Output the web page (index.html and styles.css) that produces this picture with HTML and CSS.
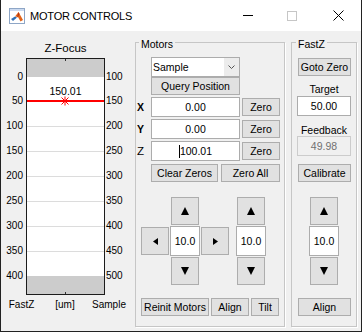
FILE: index.html
```html
<!DOCTYPE html>
<html>
<head>
<meta charset="utf-8">
<title>MOTOR CONTROLS</title>
<link rel="stylesheet" href="styles.css">
</head>
<body>
<div class="window">
  <div class="titlebar">
    <svg class="appicon" width="16" height="16" viewBox="0 0 16 16">
      <rect x="0.5" y="0.5" width="15" height="15" fill="#ffffff" stroke="#8ea6c6"/>
      <rect x="1" y="1" width="14" height="2" fill="#cbdaf0"/>
      <path d="M2 11 L6 8.5 L8 9.5 L4 13 Z" fill="#2d6fb8"/>
      <path d="M6 8.5 L9.5 4 L14 12 L11.5 13.5 L9 9 Z" fill="#e2641a"/>
      <path d="M9.5 4 L10.5 6 L9 9 L8 9.5 Z" fill="#b8360f"/>
    </svg>
    <span class="title">MOTOR CONTROLS</span>
    <div class="winbtns">
      <div class="wb"><svg class="minglyph" width="10" height="1" viewBox="0 0 10 1"><rect width="10" height="1" fill="#000"/></svg></div>
      <div class="wb"><svg width="10" height="10" viewBox="0 0 10 10"><rect x="0.5" y="0.5" width="9" height="9" fill="none" stroke="#c6c6c6"/></svg></div>
      <div class="wb"><svg width="11" height="11" viewBox="0 0 11 11"><path d="M0.5 0.5 L10.5 10.5 M10.5 0.5 L0.5 10.5" stroke="#000" stroke-width="1" fill="none"/></svg></div>
    </div>
  </div>

  <div class="main">
    <div class="zpanel">
      <div class="ztitle">Z-Focus</div>
      <div class="chart">
        <div class="ticks left">
          <span>0</span><span>50</span><span>100</span><span>150</span><span>200</span><span>250</span><span>300</span><span>350</span><span>400</span>
        </div>
        <div class="plot">
          <div class="limit top"></div>
          <div class="seg first"></div>
          <div class="seg red"></div>
          <div class="seg"></div>
          <div class="seg"></div>
          <div class="seg"></div>
          <div class="seg"></div>
          <div class="seg"></div>
          <div class="seg"></div>
          <div class="limit bottom"></div>
          <span class="marker-label">150.01</span>
          <svg class="marker" width="10" height="10" viewBox="0 0 10 10">
            <path d="M5 0.5 V9.5 M0.5 5 H9.5 M1.5 1.5 L8.5 8.5 M8.5 1.5 L1.5 8.5" stroke="#ff0000" stroke-width="1" fill="none"/>
          </svg>
        </div>
        <div class="ticks right">
          <span>100</span><span>150</span><span>200</span><span>250</span><span>300</span><span>350</span><span>400</span><span>450</span><span>500</span>
        </div>
      </div>
      <div class="axislabels"><span>FastZ</span><span>[um]</span><span>Sample</span></div>
    </div>

    <fieldset class="group motors">
      <legend>Motors</legend>
      <div class="body">
        <div class="popup">
          <span class="val">Sample</span>
          <span class="arrow"><svg width="7" height="4" viewBox="0 0 7 4"><path d="M0.5 0.5 L3.5 3.5 L6.5 0.5" stroke="#555" fill="none"/></svg></span>
        </div>
        <button class="btn query">Query Position</button>
        <div class="axisrow"><span class="axlab">X</span><div class="edit">0.00</div><button class="btn zero">Zero</button></div>
        <div class="axisrow"><span class="axlab">Y</span><div class="edit">0.00</div><button class="btn zero">Zero</button></div>
        <div class="axisrow"><span class="axlab zlab">Z</span><div class="edit"><span class="caret"></span>100.01</div><button class="btn zero">Zero</button></div>
        <div class="clearrow">
          <button class="btn clear">Clear Zeros</button>
          <button class="btn zeroall">Zero All</button>
        </div>
        <div class="pad">
          <button class="btn abtn up1"><svg width="8" height="8" viewBox="0 0 8 8"><path d="M4 0 L8 8 H0 Z"/></svg></button>
          <button class="btn abtn left1"><svg width="5" height="7" viewBox="0 0 5 7"><path d="M0 3.5 L5 0 V7 Z"/></svg></button>
          <div class="edit step mid1">10.0</div>
          <button class="btn abtn right1"><svg width="5" height="7" viewBox="0 0 5 7"><path d="M5 3.5 L0 0 V7 Z"/></svg></button>
          <button class="btn abtn down1"><svg width="8" height="8" viewBox="0 0 8 8"><path d="M4 8 L8 0 H0 Z"/></svg></button>
          <button class="btn abtn up2"><svg width="8" height="8" viewBox="0 0 8 8"><path d="M4 0 L8 8 H0 Z"/></svg></button>
          <div class="edit step mid2">10.0</div>
          <button class="btn abtn down2"><svg width="8" height="8" viewBox="0 0 8 8"><path d="M4 8 L8 0 H0 Z"/></svg></button>
        </div>
        <div class="bottomrow">
          <button class="btn reinit">Reinit Motors</button>
          <button class="btn align">Align</button>
          <button class="btn tilt">Tilt</button>
        </div>
      </div>
    </fieldset>

    <fieldset class="group fastz">
      <legend>FastZ</legend>
      <div class="body">
        <button class="btn wide goto">Goto Zero</button>
        <div class="lbl target">Target</div>
        <div class="edit fz">50.00</div>
        <div class="lbl feedback">Feedback</div>
        <div class="edit fz disabled">49.98</div>
        <button class="btn wide calib">Calibrate</button>
        <button class="btn abtn fzup"><svg width="8" height="8" viewBox="0 0 8 8"><path d="M4 0 L8 8 H0 Z"/></svg></button>
        <div class="edit step fzmid">10.0</div>
        <button class="btn abtn fzdown"><svg width="8" height="8" viewBox="0 0 8 8"><path d="M4 8 L8 0 H0 Z"/></svg></button>
        <button class="btn wide fzalign">Align</button>
      </div>
    </fieldset>
  </div>
</div>
</body>
</html>
```

FILE: styles.css
```css
* { box-sizing: border-box; }
html, body { margin: 0; padding: 0; background: #ffffff; }
body {
  font-family: "Liberation Sans", Arial, sans-serif;
  font-size: 10.5px;
  color: #000;
}

.window {
  width: 362px;
  height: 332px;
  border: 1px solid #222;
  border-top: none;
  background: #f0f0f0;
  display: flex;
  flex-direction: column;
  overflow: hidden;
}

/* title bar */
.titlebar {
  height: 31px;
  flex: none;
  background: #fff;
  display: flex;
  align-items: center;
  padding-left: 8px;
}
.appicon { flex: none; }
.title {
  margin-left: 5px;
  margin-top: 1px;
  font-size: 11px;
  line-height: 13px;
  letter-spacing: -0.2px;
}
.winbtns { margin-left: auto; display: flex; height: 100%; }
.wb {
  width: 46px;
  height: 31px;
  display: flex;
  align-items: center;
  justify-content: center;
}
.minglyph { margin-left: 3px; }

/* main */
.main {
  flex: 1;
  display: flex;
  align-items: flex-start;
  padding-top: 3px;
}

/* Z-focus panel */
.zpanel {
  width: 134px;
  flex: none;
  display: flex;
  flex-direction: column;
}
.ztitle {
  margin-top: 8px;
  margin-left: 25px;
  width: 79px;
  text-align: center;
  font-size: 11.5px;
  line-height: 12px;
}
.chart { margin-top: 4px; display: flex; }
.ticks {
  display: flex;
  flex-direction: column;
  padding-top: 13px;
  font-size: 10px;
  line-height: 12px;
}
.ticks span { height: 12px; }
.ticks span + span { margin-top: 13px; }
.ticks span:nth-child(2) { margin-top: 12px; }
.ticks.left { width: 22px; margin-right: 3px; align-items: flex-end; }
.ticks.right { margin-left: 1px; }

.plot {
  position: relative;
  flex: none;
  width: 79px;
  height: 237px;
  border: 1px solid #1c1c1c;
  background: #fff;
  display: flex;
  flex-direction: column;
}
.limit {
  height: 18px;
  flex: none;
  background-color: #cccccc;
  background-image: linear-gradient(#333, #333);
  background-size: 1px 2px;
  background-repeat: no-repeat;
}
.limit.top { background-position: 38px 0; }
.limit.bottom { background-position: 38px 16px; }
.seg { height: 25px; flex: none; border-top: 1px solid #dcdcdc; }
.seg.first { height: 24px; border-top: none; }
.seg.red { border-top-color: #ff0000; box-shadow: 0 -1px 0 #ff0000; }
.marker-label {
  position: absolute;
  left: 0;
  right: 0;
  top: 26px;
  text-align: center;
  line-height: 12px;
  font-size: 10.5px;
}
.marker { position: absolute; left: 33px; top: 37px; }

.axislabels {
  margin-top: 4px;
  display: grid;
  grid-template-columns: 41px 46px 42px;
  font-size: 10px;
  line-height: 12px;
  text-align: center;
}

/* group boxes */
.group {
  margin: 0;
  padding: 0;
  min-width: 0;
  border: 1px solid #c6c6c6;
  box-shadow: 1px 1px 0 #ffffff;
}
.group legend {
  padding: 4px 2px 0;
  line-height: 12px;
  font-size: 10.5px;
}
.group .body {
  display: flex;
  flex-direction: column;
  padding-bottom: 10px;
}
.motors { width: 150px; padding-left: 1px; }
.motors legend { margin-left: 2px; }
.motors .body { align-items: flex-start; }
.fastz { width: 66px; margin-left: 6px; }
.fastz legend { margin-left: 4px; }
.fastz .body { align-items: center; }

/* widgets */
.btn {
  height: 18px;
  margin: 0;
  padding: 0;
  border: 1px solid #adadad;
  border-radius: 0;
  background: #e1e1e1;
  font: inherit;
  line-height: 16px;
  color: #000;
  text-align: center;
  white-space: nowrap;
  appearance: none;
}
.edit {
  height: 20px;
  border: 1px solid #acacac;
  background: #fff;
  text-align: center;
  line-height: 18px;
  white-space: nowrap;
}
.edit.disabled { background: #f0f0f0; border-color: #cccccc; color: #707070; }

.popup {
  margin: 7px 0 0 14px;
  width: 89px;
  height: 20px;
  border: 1px solid #acacac;
  background: #fff;
  display: flex;
}
.popup .val { flex: 1; padding-left: 1px; line-height: 18px; }
.popup .arrow {
  width: 15px;
  background: #ececec;
  display: flex;
  align-items: center;
  justify-content: center;
}
.query { margin-left: 14px; width: 89px; }

.axisrow { display: flex; align-items: center; margin-top: 2px; }
.axisrow .edit { width: 89px; }
.axlab { width: 14px; font-weight: bold; font-size: 10.5px; line-height: 12px; }
.axlab.zlab { font-weight: normal; font-size: 11.5px; }
.caret {
  display: inline-block;
  width: 1px;
  height: 13px;
  background: #000;
  vertical-align: -3px;
}
.zero { width: 38px; margin-left: 2px; }

.clearrow { display: flex; gap: 3px; margin: 3px 0 0 14px; }
.clear { width: 67px; }
.zeroall { width: 59px; }

.pad {
  margin: 15px 0 0 4px;
  display: grid;
  grid-template-columns: 28px 30px 28px 5px 30px;
  grid-template-rows: 28px 30px 28px;
  gap: 1px;
}
.abtn {
  width: 28px;
  height: 28px;
  display: flex;
  align-items: center;
  justify-content: center;
  justify-self: center;
  align-self: center;
}
.abtn svg { fill: #000; }
.step { width: 30px; height: 30px; line-height: 28px; }
.up1 { grid-column: 2; grid-row: 1; }
.left1 { grid-column: 1; grid-row: 2; }
.mid1 { grid-column: 2; grid-row: 2; }
.right1 { grid-column: 3; grid-row: 2; }
.down1 { grid-column: 2; grid-row: 3; }
.up2 { grid-column: 5; grid-row: 1; }
.mid2 { grid-column: 5; grid-row: 2; }
.down2 { grid-column: 5; grid-row: 3; }

.bottomrow { display: flex; gap: 2px; margin: 13px 0 0 4px; }
.reinit { width: 68px; }
.align { width: 38px; }
.tilt { width: 28px; }

/* FastZ column */
.wide { width: 53px; margin-left: 1px; }
.goto { margin-top: 8px; }
.lbl { line-height: 12px; font-size: 10.5px; }
.target { margin-top: 7px; }
.fz { width: 54px; margin-top: 1px; }
.feedback { margin-top: 8px; }
.fz.disabled { margin-top: 0; }
.calib { margin-top: 8px; }
.fzup { margin-top: 15px; }
.fzmid { margin-top: 1px; }
.fzdown { margin-top: 1px; }
.fzalign { margin-top: 13px; }
```
